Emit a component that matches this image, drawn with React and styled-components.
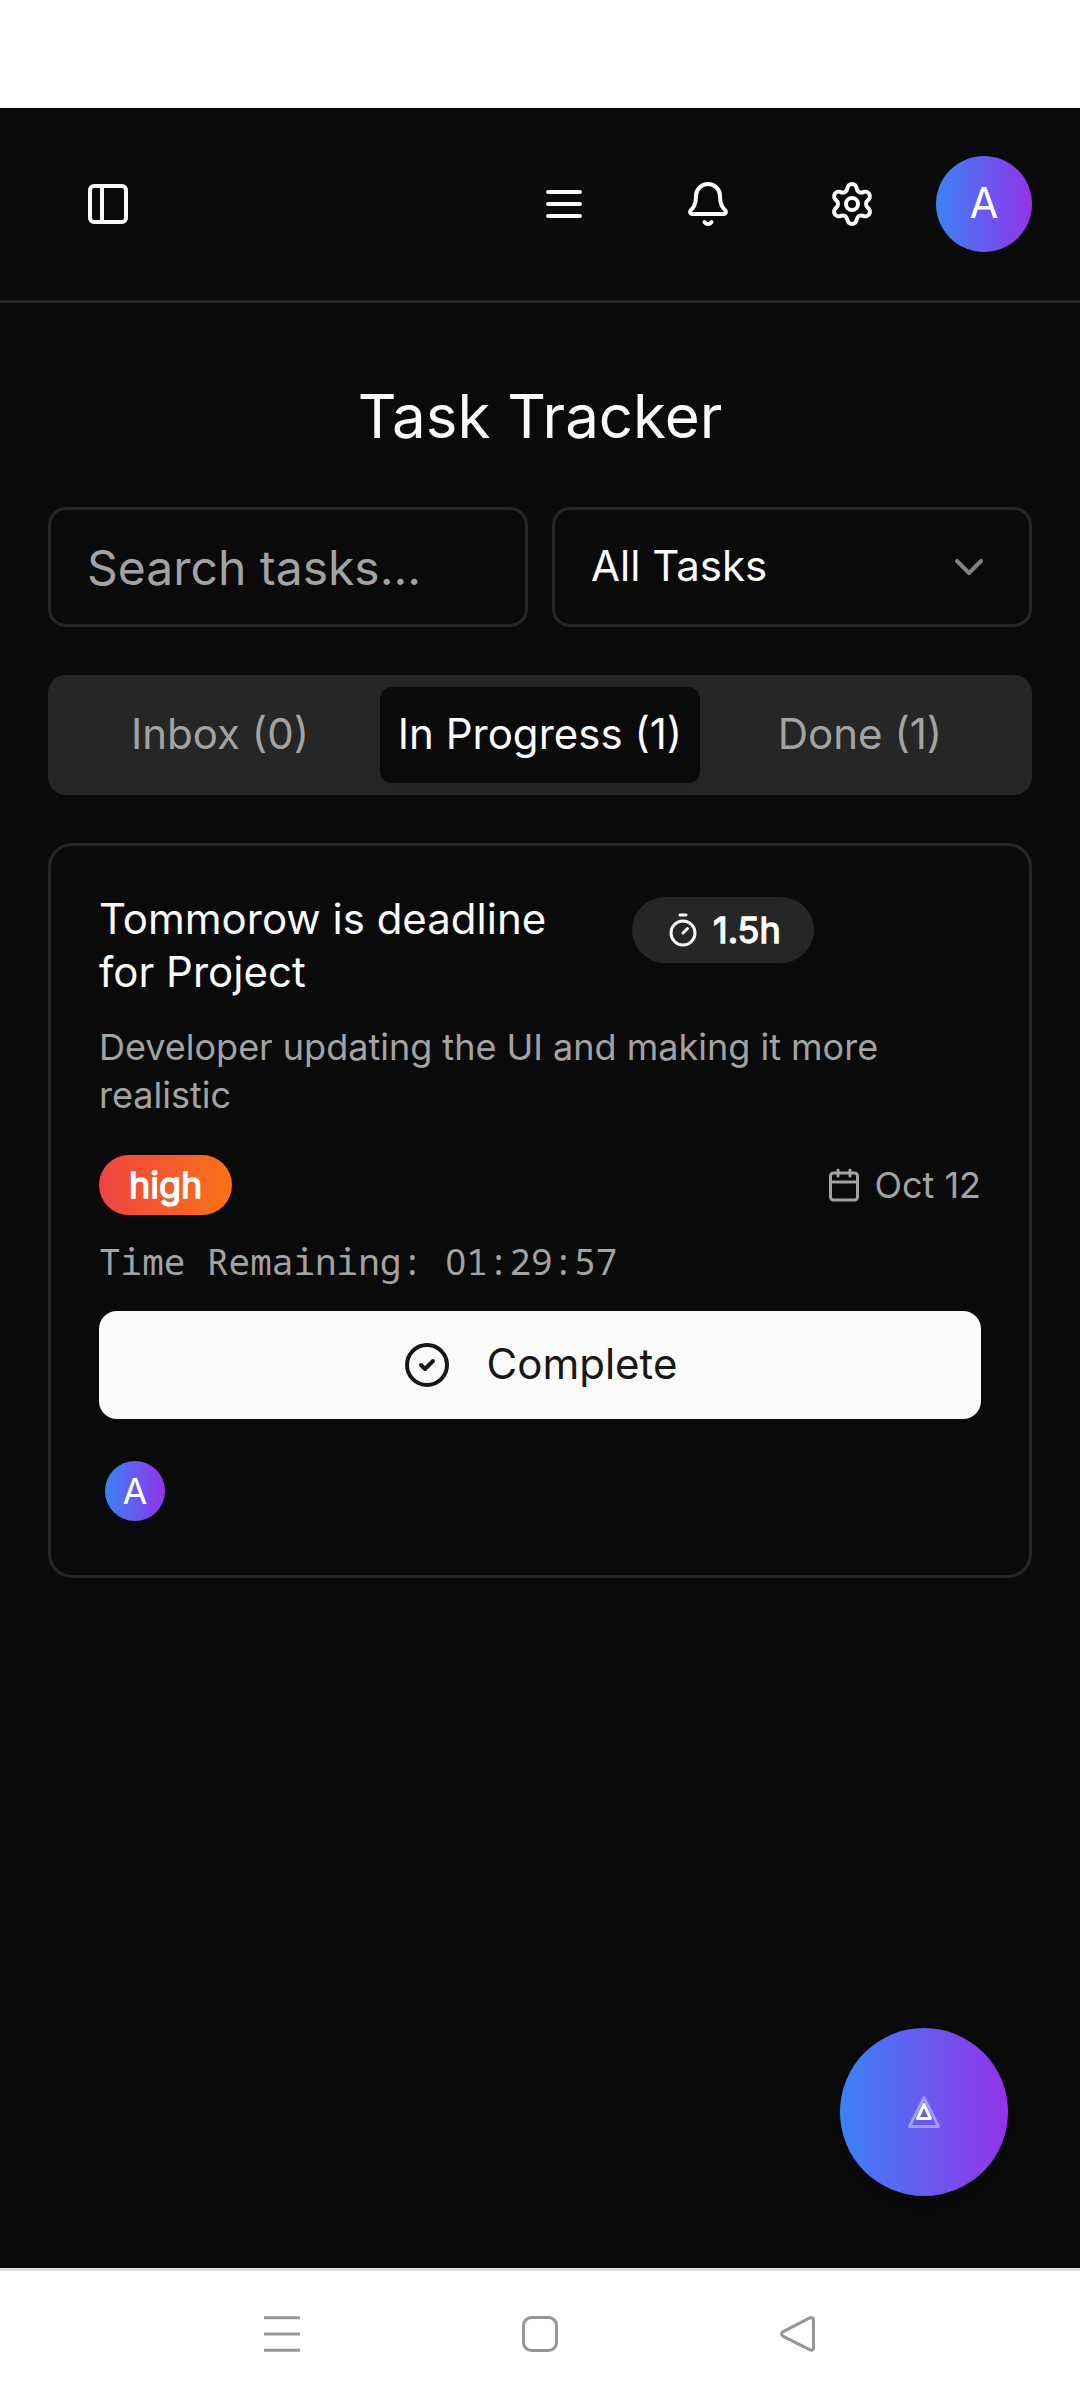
import styled, { createGlobalStyle } from "styled-components";
import {
  Bell,
  Calendar,
  ChevronDown,
  CircleCheck,
  PanelLeft,
  Settings,
  Timer,
} from "lucide-react";

const tabs = [
  { name: "Inbox", total: 0 },
  { name: "In Progress", total: 1, active: true },
  { name: "Done", total: 1 },
];

const task = {
  title: "Tommorow is deadline for Project",
  hours: "1.5h",
  description: "Developer updating the UI and making it more realistic",
  priority: "high",
  date: "Oct 12",
  remaining: "01:29:57",
  owner: "A",
};

// ---------
// - Icons -
// ---------
const MenuIcon = () => (
  <svg
    width="48"
    height="48"
    viewBox="0 0 24 24"
    fill="none"
    stroke="currentColor"
    strokeWidth="2"
    strokeLinecap="round"
  >
    <path d="M4 6h16M4 12h16M4 18h16" />
  </svg>
);

const TriangleLogo = () => (
  <svg
    width="32"
    height="32"
    viewBox="0 0 32 32"
    fill="none"
    stroke="#fff"
    strokeWidth="3"
    strokeLinejoin="round"
  >
    <path d="M16 1.8 30.5 30.5H1.5Z" opacity="0.4" />
    <path d="M16 8.6 22.4 22.5H9.6Z" />
  </svg>
);

// ----------
// - Header -
// ----------
const Header = () => (
  <TopBar>
    <IconButton>
      <PanelLeft size={48} />
    </IconButton>
    <Actions>
      <IconButton>
        <MenuIcon />
      </IconButton>
      <IconButton>
        <Bell size={48} />
      </IconButton>
      <IconButton>
        <Settings size={48} />
      </IconButton>
      <Avatar $size={96}>A</Avatar>
    </Actions>
  </TopBar>
);

// The mono font slashes its zeros, so they are drawn with the sans one
const Clock = ({ time }) =>
  time
    .split(/(0)/)
    .map((part, i) => (part === "0" ? <Zero key={i}>0</Zero> : part));

// -------------
// - Task card -
// -------------
const TaskCard = ({ data }) => (
  <Card>
    <CardHead>
      <TaskTitle>{data.title}</TaskTitle>
      <HoursBadge>
        <Timer size={36} />
        {data.hours}
      </HoursBadge>
    </CardHead>
    <Description>{data.description}</Description>
    <Meta>
      <Priority>{data.priority}</Priority>
      <DueDate>
        <Calendar size={36} />
        {data.date}
      </DueDate>
    </Meta>
    <Remaining>
      Time Remaining: <Clock time={data.remaining} />
    </Remaining>
    <CompleteButton>
      <CircleCheck size={48} />
      <Label>Complete</Label>
    </CompleteButton>
    <Owners>
      <Avatar $size={60}>{data.owner}</Avatar>
    </Owners>
  </Card>
);

const App = () => {
  return (
    <Screen>
      <GlobalStyle />
      <StatusBar />
      <Page>
        <Header />
        <Main>
          <Title>Task Tracker</Title>
          <Filters>
            <Search placeholder="Search tasks..." />
            <Select>
              <Label>All Tasks</Label>
              <ChevronDown size={48} />
            </Select>
          </Filters>
          <TabList>
            {tabs.map((tab) => (
              <Tab key={tab.name} $active={tab.active}>
                {tab.name} ({tab.total})
              </Tab>
            ))}
          </TabList>
          <TaskCard data={task} />
        </Main>
        <FloatingButton>
          <TriangleLogo />
        </FloatingButton>
      </Page>
      <NavBar>
        <svg width="36" height="36" viewBox="0 0 36 36">
          <path d="M0 1.8h36M0 18h36M0 34.2h36" />
        </svg>
        <svg width="36" height="36" viewBox="0 0 36 36">
          <rect x="1.5" y="1.5" width="33" height="33" rx="8" />
        </svg>
        <svg width="36" height="36" viewBox="0 0 36 36">
          <path d="M2.8 15.8 29.6 2Q33.5 .8 33.5 4V32Q33.5 35.2 29.6 33.6L2.8 20.2Q.2 18 2.8 15.8Z" />
        </svg>
      </NavBar>
    </Screen>
  );
};

export default App;

// ---------------------
// - Styled Components -
// ---------------------
const GlobalStyle = createGlobalStyle`
  * {
    box-sizing: border-box;
  }

  body {
    margin: 0;
    background: #fff;
    font-family: Inter, sans-serif;
  }

  h1, h3, p {
    margin: 0;
    font-weight: 400;
  }

  svg {
    flex-shrink: 0;
  }
`;

const Screen = styled.div`
  width: 1080px;
  height: 2400px;
  display: flex;
  flex-direction: column;
`;

const StatusBar = styled.div`
  height: 108px;
  background: #fff;
`;

const Page = styled.div`
  position: relative;
  flex: 1;
  color: #fafafa;
  background: #0a0a0a;
`;

const TopBar = styled.header`
  height: 195px;
  display: flex;
  justify-content: space-between;
  align-items: center;
  padding: 0 48px;
  border-bottom: 3px solid #262626;
`;

const Actions = styled.div`
  display: flex;
  align-items: center;
  gap: 24px;
`;

const IconButton = styled.button`
  width: 120px;
  height: 120px;
  display: flex;
  justify-content: center;
  align-items: center;
  padding: 0;
  border: 0;
  color: #fafafa;
  background: none;
`;

const Avatar = styled.div`
  width: ${({ $size }) => $size}px;
  height: ${({ $size }) => $size}px;
  display: flex;
  justify-content: center;
  align-items: center;
  padding-bottom: ${({ $size }) => ($size > 60 ? 3 : 0)}px;
  border-radius: 50%;
  font-size: ${({ $size }) => ($size > 60 ? 42 : 36)}px;
  color: #fff;
  background: linear-gradient(to right, #3b82f6, #9333ea);
`;

const Label = styled.span`
  padding-bottom: 3px;
`;

const Main = styled.main`
  padding: 72px 48px 0;
`;

const Title = styled.h1`
  margin-bottom: 50px;
  font-size: 60px;
  line-height: 82px;
  text-align: center;
`;

const Filters = styled.div`
  display: grid;
  grid-template-columns: 1fr 1fr;
  gap: 24px;
  margin-bottom: 48px;
`;

const Search = styled.input`
  width: 100%;
  height: 120px;
  padding: 0 36px;
  border: 3px solid #262626;
  border-radius: 18px;
  font: 48px Inter, sans-serif;
  color: #fafafa;
  background: #0a0a0a;

  &::placeholder {
    color: #a3a3a3;
    opacity: 1;
  }
`;

const Select = styled.button`
  height: 120px;
  display: flex;
  justify-content: space-between;
  align-items: center;
  padding: 0 36px;
  border: 3px solid #262626;
  border-radius: 18px;
  font: 42px Inter, sans-serif;
  color: #fafafa;
  background: #0a0a0a;

  svg {
    opacity: 0.5;
  }
`;

const TabList = styled.div`
  height: 120px;
  display: grid;
  grid-template-columns: repeat(3, 1fr);
  padding: 12px;
  margin-bottom: 48px;
  border-radius: 18px;
  background: #262626;
`;

const Tab = styled.button`
  padding: 0 0 3px;
  border: 0;
  border-radius: 12px;
  font: 42px Inter, sans-serif;
  white-space: nowrap;
  color: ${({ $active }) => ($active ? "#fafafa" : "#a3a3a3")};
  background: ${({ $active }) => ($active ? "#0a0a0a" : "none")};
  box-shadow: ${({ $active }) =>
    $active ? "0 3px 6px rgba(0, 0, 0, 0.05)" : "none"};
`;

const Card = styled.section`
  height: 735px;
  padding: 48px;
  border: 3px solid #262626;
  border-radius: 24px;
`;

const CardHead = styled.div`
  height: 105px;
  display: flex;
  align-items: flex-start;
`;

const TaskTitle = styled.h3`
  width: 533px;
  margin-top: -1px;
  padding-right: 60px;
  font-size: 42px;
  line-height: 52.5px;
`;

const HoursBadge = styled.span`
  height: 66px;
  display: flex;
  align-items: center;
  gap: 12px;
  padding: 0 33px;
  margin-top: 3px;
  border-radius: 33px;
  font-size: 36px;
  -webkit-text-stroke: 1.4px currentColor;
  background: #262626;
`;

const Description = styled.p`
  margin-top: 24px;
  font-size: 36px;
  line-height: 48px;
  color: #a3a3a3;
`;

const Meta = styled.div`
  display: flex;
  justify-content: space-between;
  align-items: center;
  margin-top: 36px;
`;

const Priority = styled.span`
  padding: 6px 30px;
  border-radius: 30px;
  font-size: 36px;
  line-height: 48px;
  -webkit-text-stroke: 1.4px currentColor;
  color: #fff;
  background: linear-gradient(to right, #ef4444, #f97316);
`;

const DueDate = styled.span`
  display: flex;
  align-items: center;
  gap: 12px;
  font-size: 36px;
  line-height: 48px;
  color: #a3a3a3;
`;

const Remaining = styled.p`
  height: 48px;
  margin-top: 24px;
  font-family: "Noto Sans Mono", "DejaVu Sans Mono", monospace;
  font-size: 36px;
  line-height: 46px;
  color: #a3a3a3;
`;

const Zero = styled.span`
  padding-left: 1px;
  font-family: "Noto Sans", sans-serif;
`;

const CompleteButton = styled.button`
  width: 100%;
  height: 108px;
  display: flex;
  justify-content: center;
  align-items: center;
  gap: 36px;
  padding: 0;
  margin-top: 24px;
  border: 0;
  border-radius: 18px;
  font: 42px Inter, sans-serif;
  color: #171717;
  background: #fafafa;
`;

const Owners = styled.div`
  display: flex;
  padding: 6px;
  margin-top: 36px;
`;

const FloatingButton = styled.button`
  position: absolute;
  right: 72px;
  bottom: 72px;
  width: 168px;
  height: 168px;
  display: flex;
  justify-content: center;
  align-items: center;
  padding: 0;
  border: 0;
  border-radius: 50%;
  background: linear-gradient(to right, #3b82f6, #9333ea);
  box-shadow: 0 12px 18px -6px rgba(0, 0, 0, 0.1);
`;

const NavBar = styled.nav`
  height: 132px;
  display: flex;
  justify-content: center;
  align-items: center;
  gap: 222px;
  border-top: 3px solid #e0e0e0;
  background: #fff;

  svg {
    margin-bottom: 3px;
    fill: none;
    stroke: #959595;
    stroke-width: 3;
  }
`;
